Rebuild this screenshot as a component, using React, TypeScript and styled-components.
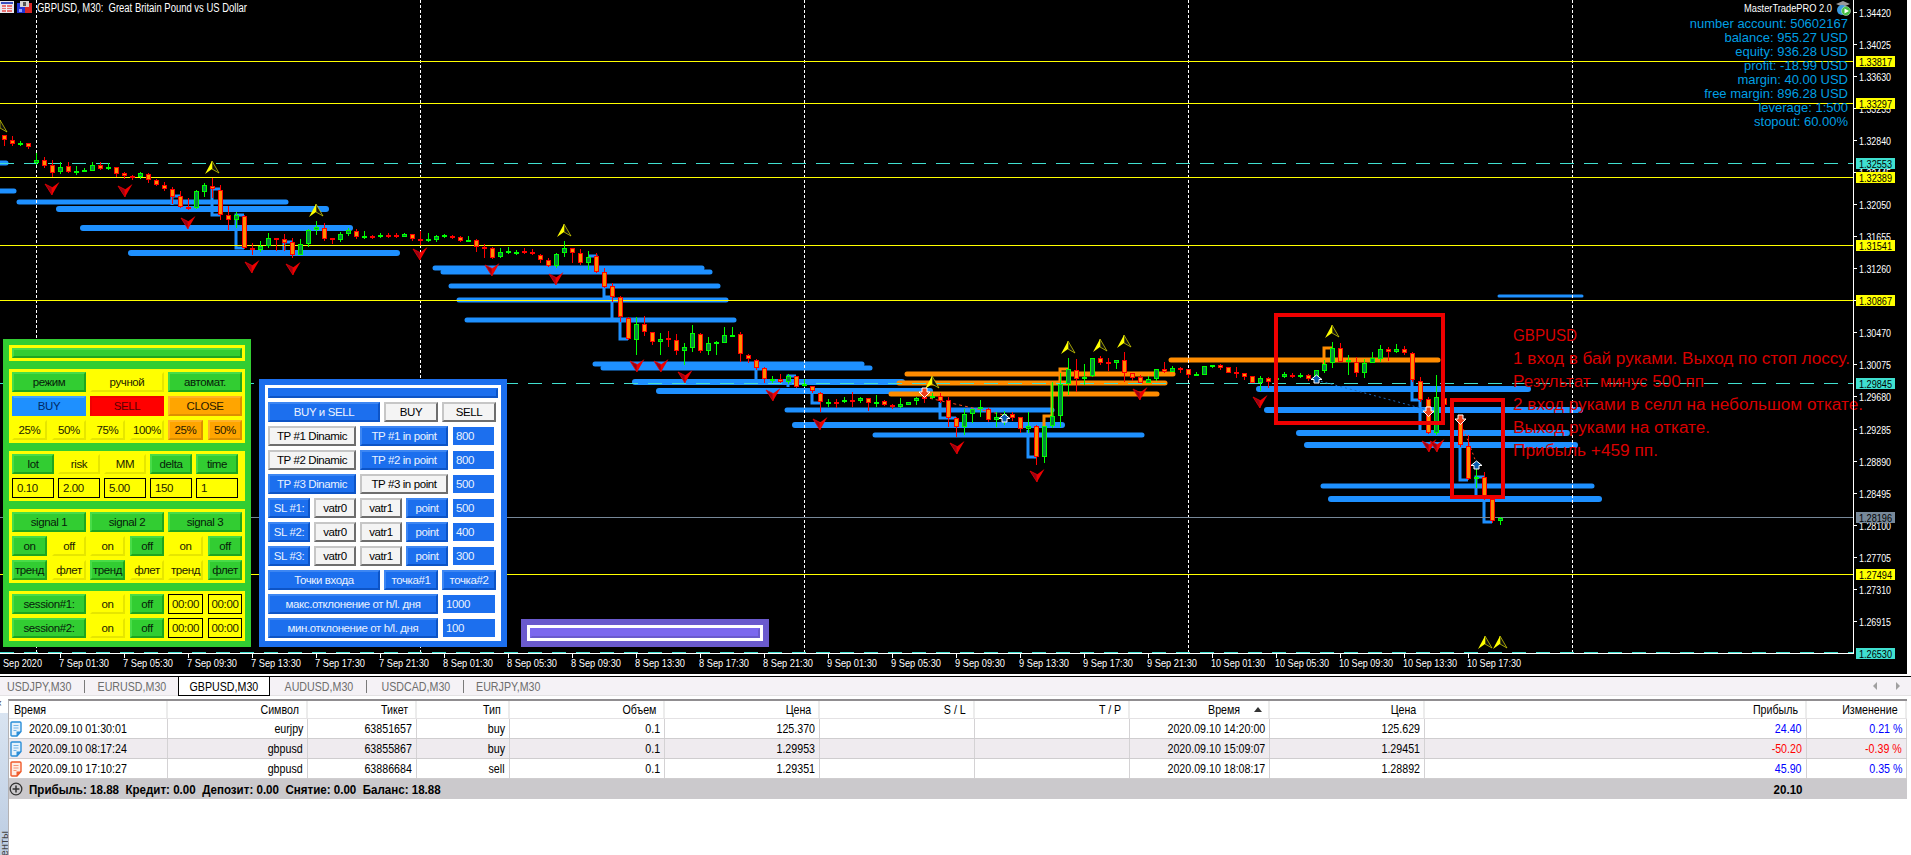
import React from "react";
import styled, { createGlobalStyle, css } from "styled-components";

const Global = createGlobalStyle`
  html, body { margin: 0; padding: 0; background: #fff; overflow: hidden; }
  * { box-sizing: border-box; }
`;

const SANS = `"Liberation Sans", Arial, sans-serif`;

type Candle = [number, number, number, number, number, 0 | 1];
// x, wick top, wick bottom, body top, body bottom, 1 = bull
const CANDLES: Candle[] = [
  [4,135,146,135,140,0],[12,136,146,140,144,0],[20,141,146,143,145,1],[28,143,149,143,147,0],
  [36,153,165,160,163,1],[44,157,168,160,166,0],[52,160,177,165,173,0],[60,162,174,167,172,1],
  [68,162,173,166,172,0],[76,166,175,171,172,1],[84,168,172,170,172,1],[92,162,171,165,171,1],
  [100,162,170,165,169,0],[108,163,170,167,169,1],[116,167,177,167,174,0],[124,172,179,173,176,0],
  [132,175,180,176,178,0],[140,172,179,173,177,1],[148,173,183,174,180,0],[156,179,186,180,185,0],
  [164,182,191,185,189,0],[172,187,204,189,197,0],[180,191,208,196,207,0],[188,198,210,207,209,0],
  [196,190,209,191,208,1],[204,183,197,185,192,1],[212,178,198,186,189,0],[220,185,220,190,215,0],
  [228,206,230,215,220,0],[236,212,228,215,220,1],[244,215,249,216,248,0],[252,243,255,248,249,0],
  [260,241,252,246,250,1],[268,233,248,238,246,1],[276,238,251,238,240,0],[284,234,251,239,243,0],
  [292,238,258,242,255,0],[300,239,255,244,255,1],[308,229,247,230,244,1],[316,221,235,227,230,1],
  [324,223,241,228,239,0],[332,238,244,238,240,0],[340,232,242,234,240,1],[348,228,236,230,234,1],
  [356,229,239,231,237,0],[364,231,239,236,237,1],[372,235,239,236,237,0],[380,233,238,235,237,1],
  [388,233,238,235,236,0],[396,233,238,235,237,0],[404,233,237,234,237,1],[412,234,241,234,239,0],
  [420,231,245,239,241,0],[428,233,242,239,241,1],[436,235,242,236,240,1],[444,234,238,235,236,1],
  [452,235,239,236,237,0],[460,236,242,237,241,0],[468,236,241,240,241,1],[476,239,252,240,247,0],
  [484,244,258,247,248,0],[492,247,259,248,258,0],[500,248,258,252,257,1],[508,247,254,251,253,1],
  [516,250,255,252,253,1],[524,248,254,251,253,0],[532,249,255,252,254,0],[540,254,263,255,260,0],
  [548,258,267,260,266,0],[556,253,268,254,266,1],[564,241,257,248,253,1],[572,248,263,248,253,0],
  [580,249,265,253,263,0],[588,251,270,257,263,1],[596,253,273,256,272,0],[604,268,288,272,287,0],
  [612,283,302,286,297,0],[620,296,322,297,317,0],[628,317,340,318,339,0],[636,317,355,324,340,1],
  [644,316,336,324,332,0],[652,332,345,332,342,0],[660,333,355,339,342,1],[668,331,347,338,340,0],
  [676,334,355,340,351,0],[684,343,365,347,351,1],[692,325,352,333,348,1],[700,333,353,334,351,0],
  [708,337,355,343,351,1],[716,341,355,342,343,1],[724,327,343,335,343,1],[732,327,337,335,336,1],
  [740,332,362,334,354,0],[748,354,363,355,359,0],[756,359,370,360,368,0],[764,367,383,368,379,0],
  [772,376,383,379,380,1],[780,374,383,379,382,0],[788,374,384,376,382,1],[796,376,388,376,387,0],
  [804,379,387,384,385,1],[812,386,393,386,391,0],[820,392,412,393,402,0],[828,399,407,402,403,1],
  [836,399,408,402,403,0],[844,397,403,400,402,1],[852,392,407,400,401,0],[860,397,403,398,401,1],
  [868,398,411,398,403,0],[876,395,407,402,404,1],[884,400,406,401,405,0],[892,404,409,405,407,0],
  [900,398,408,404,407,1],[908,402,405,402,405,1],[916,397,405,398,401,1],[924,393,403,397,399,0],
  [932,393,399,396,398,1],[940,393,403,396,401,0],[948,397,427,400,418,0],[956,417,437,418,427,0],
  [964,409,435,414,427,1],[972,409,423,409,414,1],[980,400,417,407,409,1],[988,408,422,409,420,0],
  [996,412,427,417,420,1],[1004,411,425,414,418,1],[1012,412,421,414,418,0],[1020,417,433,417,429,0],
  [1028,412,433,426,429,1],[1036,425,465,426,457,0],[1044,426,463,426,457,1],[1052,382,428,416,426,1],
  [1060,373,427,384,416,1],[1068,358,395,369,384,1],[1076,359,392,370,379,0],[1084,364,385,377,379,1],
  [1092,358,377,358,376,1],[1100,356,365,358,363,0],[1108,358,371,362,363,0],[1116,360,369,360,363,1],
  [1124,352,382,360,373,0],[1132,373,381,373,378,0],[1140,375,383,377,383,0],[1148,376,383,379,383,1],
  [1156,369,381,369,379,1],[1164,362,373,369,372,0],[1172,366,372,368,372,1],[1180,367,373,368,370,0],
  [1188,369,378,369,375,0],[1196,372,376,374,376,1],[1204,366,375,366,375,1],[1212,365,368,365,366,1],
  [1220,364,370,365,368,0],[1228,367,373,367,373,0],[1236,367,378,372,373,0],[1244,373,380,373,377,0],
  [1252,376,383,376,383,0],[1260,376,391,378,383,1],[1268,377,388,378,382,0],[1276,376,386,378,379,1],
  [1284,372,378,374,377,1],[1292,373,378,375,377,0],[1300,373,378,375,377,1],[1308,374,381,375,379,0],
  [1316,370,380,370,378,1],[1324,360,373,364,371,1],[1332,342,368,348,363,1],[1340,343,362,348,362,0],
  [1348,355,375,360,361,1],[1356,357,377,362,373,0],[1364,359,378,363,373,1],[1372,352,363,358,363,1],
  [1380,345,362,349,359,1],[1388,347,361,349,352,0],[1396,344,353,349,352,1],[1404,346,355,349,353,0],
  [1412,352,382,353,380,0],[1420,377,402,381,400,0],[1428,397,434,399,433,0],[1436,375,435,397,433,1],
  [1444,397,405,398,405,0],[1460,415,447,417,445,0],[1468,435,480,446,479,0],[1476,467,488,477,479,1],
  [1484,472,500,477,498,0],[1492,495,523,499,521,0],[1500,517,525,518,521,1],
];

// y, x1, x2, stroke width
const BLUE: [number, number, number, number][] = [
  [163,0,6,5],[191,0,14,5],[202,19,286,5],[209,59,326,6],[228,83,350,6],[253,131,397,6],[268,435,702,5],
  [272,443,710,5],[286,451,718,5],[300,459,726,5],[320,467,734,5],[364,595,862,5],[368,603,870,5],
  [382,635,902,6],[391,659,930,6],[410,787,1052,5],[425,795,1062,6],[435,875,1142,5],[389,1259,1528,6],
  [410,1267,1580,6],[433,1299,1567,6],[445,1307,1575,6],[486,1323,1592,5],[499,1331,1599,6],[296,1499,1582,3],
];
const ORANGE: [number, number, number, number][] = [
  [374,907,1173,5],[383,899,1165,5],[394,891,1157,5],[360,1171,1438,5],
];
const BLUE_STEPS = [
  "172,205 172,196 180,196","220,189 212,189 212,215 220,215","244,215 236,215 236,248 244,248","292,242 284,242 284,253",
  "588,256 596,256 596,273","604,272 604,297 612,297","612,302 612,318","620,322 620,339 628,339","756,368 756,380",
  "796,376 788,376 788,387","812,392 812,403 820,403","940,402 940,418 948,418","956,418 948,418","1028,430 1028,457 1036,457",
  "1412,380 1412,400 1420,400","1420,400 1420,433 1428,433","1460,445 1460,480 1468,480","1476,495 1476,477 1484,477","1484,498 1484,522 1492,522",
];
const ORANGE_STEPS = ["1052,416 1044,416 1044,427","1068,369 1060,369 1060,384","1332,348 1324,348 1324,364"];
const OLIVE_STEPS = ["1052,383 1052,416"];

const RED_MARKS: [number, number][] = [
  [52,182],[125,184],[188,216],[252,260],[293,262],[420,247],[492,263],[556,272],[637,359],[661,359],[685,370],
  [773,388],[820,417],[957,441],[1037,469],[1140,387],[1260,395],[1429,439],[1437,439],
];
const YELLOW_MARKS: [number, number][] = [
  [0,120],[212,161],[316,204],[564,224],[932,376],[1068,341],[1100,339],[1124,335],[1332,325],[1485,636],[1500,636],
];
const DOWN_ARROWS: [number, number][] = [[924,388],[1428,407],[1460,415]];
const UP_ARROWS: [number, number][] = [[1004,414],[1316,375],[1476,461]];

const VLINES = [36, 420, 804, 1188, 1572];
const YELLOW_LINES = [61, 103, 177, 245, 300, 574];
const TEAL_LINES = [163, 383];
const AXIS_TICKS: [string, number][] = [
  ["1.34420",12],["1.34025",44],["1.33630",76],["1.33235",108],["1.32840",140],["1.32445",172],["1.32050",204],["1.31655",236],
  ["1.31260",268],["1.30865",300],["1.30470",332],["1.30075",364],["1.29680",396],["1.29285",429],["1.28890",461],["1.28495",493],
  ["1.28100",525],["1.27705",557],["1.27310",589],["1.26915",621],
];
const PRICE_TAGS: [string, number, string][] = [
  ["1.33817",61,"#ffff00"],["1.33297",103,"#ffff00"],["1.32553",163,"#40e0d0"],["1.32389",177,"#ffff00"],["1.31541",245,"#ffff00"],
  ["1.30867",300,"#ffff00"],["1.29845",383,"#40e0d0"],["1.28196",517,"#778899"],["1.27494",574,"#ffff00"],["1.26530",653,"#40e0d0"],
];
const DAY_TIMES = [
  "7 Sep 01:30","7 Sep 05:30","7 Sep 09:30","7 Sep 13:30","7 Sep 17:30","7 Sep 21:30",
  "8 Sep 01:30","8 Sep 05:30","8 Sep 09:30","8 Sep 13:30","8 Sep 17:30","8 Sep 21:30",
  "9 Sep 01:30","9 Sep 05:30","9 Sep 09:30","9 Sep 13:30","9 Sep 17:30","9 Sep 21:30",
  "10 Sep 01:30","10 Sep 05:30","10 Sep 09:30","10 Sep 13:30","10 Sep 17:30",
];
const NOTES: [string, number, number][] = [
  ["GBPUSD",335,64],
  ["1 вход в бай руками. Выход по стоп лоссу.",358,337],
  ["Результат  минус 500 пп",381,191],
  ["2 вход руками в селл на небольшом откате.",404,350],
  ["Выход руками на откате.",427,197],
  ["Прибыль +459 пп.",450,145],
];

const Page = styled.div`
  width: 1911px;
  height: 855px;
  display: flex;
  flex-direction: column;
  overflow: hidden;
  background: #fff;
  font-family: ${SANS};
`;
const ChartArea = styled.div`
  position: relative;
  height: 674px;
  flex: none;
  background: #fff;
`;
const ChartSvg = styled.svg`
  display: block;
  background: #000;
`;
const InfoBox = styled.div`
  position: absolute;
  top: 17px;
  right: 63px;
  display: flex;
  flex-direction: column;
  align-items: flex-end;
  color: #009fe3;
  font: 13px/14px ${SANS};
`;
const PanelBase = styled.section`
  position: absolute;
  padding: 6px;
  display: flex;
  flex-direction: column;
  font: 11.5px ${SANS};
  letter-spacing: -0.4px;
`;
const GreenPanel = styled(PanelBase)`
  left: 3px;
  top: 339px;
  width: 248px;
  height: 308px;
  gap: 8px;
  background: #32cd32;
`;
const GreenSection = styled.div`
  background: #ffff00;
  padding: 3px;
  display: flex;
  flex-direction: column;
  gap: 4px;
`;
const BluePanel = styled(PanelBase)`
  left: 259px;
  top: 379px;
  width: 248px;
  height: 268px;
  background: #1c6fee;
`;
const WhiteInner = styled.div`
  background: #fff;
  height: 100%;
  padding: 3px;
  display: flex;
  flex-direction: column;
  gap: 4px;
`;
const PurplePanel = styled(PanelBase)`
  left: 521px;
  top: 619px;
  width: 248px;
  height: 28px;
  background: #6a5acd;
`;
const PurpleInner = styled.div`
  background: #fff;
  height: 16px;
  padding: 3px;
`;
const TitleBar = styled.div<{ $fill: string; $light: string; $dark: string }>`
  height: 10px;
  background: ${(p) => p.$fill};
  border-style: solid;
  border-width: 2px;
  border-color: ${(p) => p.$light} ${(p) => p.$dark} ${(p) => p.$dark} ${(p) => p.$light};
`;
const Row = styled.div<{ $cols: string; $gap?: number }>`
  display: grid;
  grid-template-columns: ${(p) => p.$cols};
  column-gap: ${(p) => p.$gap ?? 4}px;
  height: 20px;
`;
const Pair = styled.div`
  display: grid;
  grid-template-columns: 35px 34px;
  column-gap: 5px;
  height: 20px;
`;
type Tone = "green" | "yellow" | "blue" | "red" | "orange" | "deep" | "white";
const TONES: Record<Tone, string> = {
  green: "background:#32cd32;color:#06200a;border-color:#48dc48 #1fa51f #1fa51f #48dc48;",
  yellow: "background:#ffff00;color:#1c1c00;border-color:#ffff00 #e6e600 #e6e600 #ffff00;",
  blue: "background:#1e90ff;color:#002a66;border-color:#42a5ff #1e90ff #1e90ff #1e90ff;",
  red: "background:#ff0000;color:#5a0000;border-color:#f10000 #ff0000 #ff0000 #f10000;",
  orange: "background:#ffa500;color:#2a1a00;border-color:#ffb226 #dd8f00 #dd8f00 #ffb226;",
  deep: "background:#1c6fee;color:#eaf2ff;border-color:#3d86f2 #0d54c6 #0d54c6 #3d86f2;",
  white: "background:#f4f4f4;color:#000;border-color:#c6c6c6 #6e6e6e #6e6e6e #c6c6c6;",
};
const Btn = styled.button<{ $tone: Tone }>`
  appearance: none;
  margin: 0;
  padding: 0;
  min-width: 0;
  height: 20px;
  font: inherit;
  letter-spacing: inherit;
  line-height: 15px;
  text-align: center;
  white-space: nowrap;
  border-style: solid;
  border-width: 2px;
  ${(p) => css`${TONES[p.$tone]}`}
`;
const Field = styled.div<{ $center?: boolean }>`
  height: 20px;
  border: 1px solid #000;
  background: #ffff00;
  color: #1c1c00;
  line-height: 18px;
  padding-left: ${(p) => (p.$center ? 0 : 4)}px;
  text-align: ${(p) => (p.$center ? "center" : "left")};
  white-space: nowrap;
`;
const BlueField = styled.div`
  height: 18px;
  margin: 1px 0 1px 1px;
  background: #1c6fee;
  color: #eaf2ff;
  line-height: 18px;
  padding-left: 3px;
`;
const Sq = styled.span<{ $at?: string; $sx?: number }>`
  display: inline-block;
  flex: none;
  white-space: pre;
  transform: scaleX(${(p) => p.$sx ?? 0.82});
  transform-origin: ${(p) => p.$at ?? "right"} center;
`;
const TabsBar = styled.nav`
  height: 20px;
  flex: none;
  margin-top: 2px;
  border-top: 1px solid #000;
  border-bottom: 1px solid #e4e2e4;
  background: #f5f2f6;
  display: flex;
  align-items: stretch;
  position: relative;
  font: 13px ${SANS};
  color: #6d6d6d;
`;
const Tab = styled.div<{ $active?: boolean; $w: number; $rule?: boolean; $pad?: number }>`
  width: ${(p) => p.$w}px;
  padding-right: ${(p) => p.$pad ?? 0}px;
  display: flex;
  align-items: center;
  justify-content: center;
  white-space: nowrap;
  ${(p) => p.$rule && "background: linear-gradient(#7a7a7a,#7a7a7a) right 3px / 1px 13px no-repeat;"}
  ${(p) =>
    p.$active &&
    css`
      background: #fff;
      color: #000;
      margin-top: -1px;
      margin-bottom: -1px;
      border: 1px solid #000;
    `}
`;
const TabNav = styled.div`
  position: absolute;
  right: 11px;
  top: 5px;
  display: flex;
  gap: 17px;
`;
const BodyArea = styled.div`
  flex: 1;
  display: flex;
  min-height: 0;
  padding-top: 3px;
`;
const Side = styled.aside`
  width: 8px;
  flex: none;
  position: relative;
  overflow: hidden;
  font: 11px ${SANS};
  color: #444;
`;
const SideClose = styled.div`
  height: 14px;
  font: 10px/10px ${SANS};
  margin-left: -4px;
  color: #333;
`;
const SideStrip = styled.div`
  height: 100%;
  background: linear-gradient(#d9e4f1, #b8c9e0);
  padding-top: 118px;
`;
const SideLabel = styled.div`
  writing-mode: vertical-rl;
  transform: rotate(180deg);
  white-space: nowrap;
  line-height: 8px;
`;
const TablePane = styled.div`
  width: 1899px;
  border-top: 2px solid #908d90;
  border-left: 1px solid #b4b2b4;
  font: 13px ${SANS};
  color: #000;
`;
const COLS = "159px 140px 109px 93px 155px 155px 155px 155px 140px 155px 382px 100px";
const HeadRow = styled.div`
  display: grid;
  grid-template-columns: ${COLS};
  height: 18px;
  border-bottom: 1px solid #e4e2e4;
`;
const DataRow = styled.div<{ $shade?: boolean }>`
  display: grid;
  grid-template-columns: ${COLS};
  height: 20px;
  border-bottom: 1px solid #cfcdcf;
  background: ${(p) => (p.$shade ? "#efebef" : "#fff")};
`;
const HeadCell = styled.div<{ $left?: boolean }>`
  display: flex;
  align-items: center;
  justify-content: ${(p) => (p.$left ? "flex-start" : "flex-end")};
  gap: 14px;
  padding: 0 7px 0 5px;
  border-right: 2px solid #ececec;
`;
const SortMark = styled.span`
  flex: none;
  width: 0;
  height: 0;
  margin-right: -1px;
  border-left: 4px solid transparent;
  border-right: 4px solid transparent;
  border-bottom: 5px solid #333;
`;
const DataCell = styled.div<{ $color?: string; $left?: boolean }>`
  display: flex;
  align-items: center;
  justify-content: ${(p) => (p.$left ? "flex-start" : "flex-end")};
  gap: 7px;
  padding: 0 4px 0 1px;
  border-right: 1px solid #d4d2d4;
  color: ${(p) => p.$color ?? "#000"};
  white-space: nowrap;
`;
const SummaryRow = styled.div`
  display: grid;
  grid-template-columns: 1416px 382px 100px;
  height: 20px;
  background: #cbc9cc;
  font-weight: 700;
`;
const SummaryLeft = styled.div`
  display: flex;
  align-items: center;
  gap: 6px;
`;
const SummaryTotal = styled.div`
  display: flex;
  align-items: center;
  justify-content: flex-end;
  padding-right: 4px;
`;

const Mono = ({ children, x, y, w, size = 11, fill = "#fff" }: { children: React.ReactNode; x: number; y: number; w: number; size?: number; fill?: string }) => (
  <text x={x} y={y} textLength={w} lengthAdjust="spacingAndGlyphs" fontSize={size} fill={fill} fontFamily={SANS} xmlSpace="preserve">
    {children}
  </text>
);

const DocIcon = ({ tone }: { tone: "blue" | "red" }) => {
  const a = tone === "blue" ? "#2a8ed8" : "#f05a2a";
  const b = tone === "blue" ? "#e6f2fb" : "#fdece4";
  return (
    <svg width="12" height="16" viewBox="0 0 12 16" style={{ flex: "none" }}>
      <path d="M2 1h8q1 0 1 1v8.5L7 15H2q-1 0-1-1V2q0-1 1-1z" fill={b} stroke={a} strokeWidth="1.4" />
      <path d="M3.5 4.5h5M3.5 7h5M3.5 9.5h3" stroke={a} strokeWidth="1" opacity=".6" />
      <path d="M6.5 15.2v-4.7h4.7z" fill={a} />
    </svg>
  );
};

const Candles = () => (
  <g shapeRendering="crispEdges">
    {CANDLES.map(([x, hi, lo, top, bot, bull]) => {
      const c = bull ? "#00ff00" : "#ff0000";
      const f = bull ? "#068a3e" : "#ff8c00";
      const h = Math.max(bot - top, 2);
      return (
        <g key={x}>
          <rect x={x} y={hi} width={1} height={lo - hi} fill={c} />
          <rect x={x - 2} y={top} width={5} height={h} fill={c} />
          {h > 2 && <rect x={x - 1} y={top + 1} width={3} height={h - 2} fill={f} />}
        </g>
      );
    })}
  </g>
);

const Chart = () => (
  <ChartSvg width={1907} height={674} viewBox="0 0 1907 674">
    {BLUE.map(([y, a, b, w], i) => (
      <line key={i} x1={a} x2={b} y1={y} y2={y} stroke="#1e90ff" strokeWidth={w} strokeLinecap="round" />
    ))}
    {ORANGE.map(([y, a, b, w], i) => (
      <line key={i} x1={a} x2={b} y1={y} y2={y} stroke="#ff8c00" strokeWidth={w} strokeLinecap="round" />
    ))}
    {BLUE_STEPS.map((p) => (
      <polyline key={p} points={p} fill="none" stroke="#1e90ff" strokeWidth={3} />
    ))}
    {ORANGE_STEPS.map((p) => (
      <polyline key={p} points={p} fill="none" stroke="#ff8c00" strokeWidth={3} />
    ))}
    {OLIVE_STEPS.map((p) => (
      <polyline key={p} points={p} fill="none" stroke="#b8c800" strokeWidth={3} />
    ))}
    <g shapeRendering="crispEdges">
      {VLINES.map((x) => (
        <line key={x} x1={x + 0.5} x2={x + 0.5} y1={0} y2={653} stroke="#fff" strokeDasharray="3 2" />
      ))}
      {YELLOW_LINES.map((y) => (
        <line key={y} x1={0} x2={1853} y1={y + 0.5} y2={y + 0.5} stroke="#ffff00" />
      ))}
      <line x1={0} x2={1853} y1={517.5} y2={517.5} stroke="#778899" />
      {TEAL_LINES.map((y) => (
        <line key={y} x1={0} x2={1853} y1={y + 0.5} y2={y + 0.5} stroke="#40e0d0" strokeDasharray="14 10" />
      ))}
    </g>
    <polyline points="924,397 1004,415" fill="none" stroke="#ff4a1a" strokeDasharray="3 3" />
    <polyline points="1316,380 1428,410" fill="none" stroke="#1c66b8" strokeDasharray="2 3" />
    <polyline points="1460,420 1476,462" fill="none" stroke="#ff4a1a" strokeDasharray="2 3" />
    <Candles />
    {RED_MARKS.map(([x, y], i) => (
      <g key={i} transform={`translate(${x} ${y})`}>
        <path d="M-7 2 L0 13 L0 5.5 Z" fill="#980014" stroke="#f00000" strokeWidth=".8" />
        <path d="M7.5 0 L0 13 L0 5.5 Z" fill="#f00000" />
      </g>
    ))}
    {YELLOW_MARKS.map(([x, y], i) => (
      <g key={i} transform={`translate(${x} ${y})`}>
        <path d="M7 12 L0 0 L0 8 Z" fill="#111" stroke="#dede00" strokeWidth=".7" />
        <path d="M-7 13 L0 0 L0 8 Z" fill="#ffff00" />
      </g>
    ))}
    {DOWN_ARROWS.map(([x, y]) => (
      <path key={`${x}`} transform={`translate(${x} ${y})`} d="M-2 0H3V4H6L0.5 9.5L-5 4H-2Z" fill="#f0401a" stroke="#fff" />
    ))}
    {UP_ARROWS.map(([x, y]) => (
      <path key={`${x}`} transform={`translate(${x} ${y})`} d="M-2 8H3V4.5H6L0.5 0L-5 4.5H-2Z" fill="#0a5cb0" stroke="#fff" />
    ))}

    <g fill="none" stroke="#ef0000" strokeWidth={4}>
      <rect x={1276} y={315} width={167} height={108} />
      <rect x={1452} y={400} width={51} height={97} />
    </g>
    {NOTES.map(([t, y, w]) => (
      <text key={t} x={1513} y={y + 6} textLength={w} lengthAdjust="spacingAndGlyphs" fontSize={16} fill="#d80000" fontFamily={SANS} xmlSpace="preserve">
        {t}
      </text>
    ))}

    <g shapeRendering="crispEdges">
      <rect x={0} y={653} width={1853} height={1} fill="#fff" />
      <line x1={0} x2={1853} y1={652.5} y2={652.5} stroke="#40e0d0" strokeDasharray="14 10" />
      <rect x={1853} y={0} width={1} height={654} fill="#fff" />
      {AXIS_TICKS.map(([, y]) => (
        <rect key={y} x={1853} y={y} width={4} height={1} fill="#fff" />
      ))}
      {DAY_TIMES.map((_, i) => (
        <rect key={i} x={60 + 64 * i} y={653} width={1} height={5} fill="#fff" />
      ))}
    </g>
    {AXIS_TICKS.map(([t, y]) => (
      <Mono key={t} x={1859} y={y + 4.5} w={32}>{t}</Mono>
    ))}
    {PRICE_TAGS.map(([t, y, bg]) => (
      <g key={t}>
        <rect x={1856} y={y - 5} width={39} height={11} fill={bg} />
        <Mono x={1859} y={y + 4.5} w={33} fill="#000">{t}</Mono>
      </g>
    ))}
    <Mono x={3} y={667} w={39}>Sep 2020</Mono>
    {DAY_TIMES.map((t, i) => (
      <Mono key={t} x={59 + 64 * i} y={667} w={t.length > 11 ? 54 : 50}>{t}</Mono>
    ))}

    <g shapeRendering="crispEdges">
      <rect x={0} y={1} width={14} height={12} fill="#e8e8f0" />
      <rect x={1} y={2} width={12} height={2} fill="#3a4fc0" />
      <rect x={2} y={5} width={10} height={2} fill="#e87070" />
      <rect x={2} y={8} width={10} height={1} fill="#e87070" />
      <rect x={2} y={10} width={10} height={2} fill="#e87070" />
      <rect x={6} y={5} width={1} height={7} fill="#f4f4f4" />
      <rect x={17} y={3} width={8} height={10} fill="#2034d8" />
      <rect x={25} y={3} width={7} height={10} fill="#d82828" />
      <rect x={20} y={1} width={9} height={6} fill="#d4d4d4" />
      <rect x={23} y={2} width={3} height={4} fill="#555" />
      <rect x={19} y={9} width={3} height={3} fill="#90a0ff" />
    </g>
    <Mono x={37} y={12} w={210} size={12}>GBPUSD, M30:  Great Britain Pound vs US Dollar</Mono>
    <Mono x={1744} y={12} w={88} size={11.5}>MasterTradePRO 2.0</Mono>
    <g>
      <path d="M1836 4 L1843 1 L1850 4 L1843 7 Z" fill="#9a9a9a" />
      <circle cx={1842} cy={10} r={5} fill="#3a9ae0" />
      <circle cx={1846} cy={11} r={4.5} fill="#43c043" stroke="#dff0df" strokeWidth=".5" />
      <path d="M1844.5 8.5 L1849 11 L1844.5 13.5 Z" fill="#fff" />
    </g>
  </ChartSvg>
);

const TRADES = [
  { t: "2020.09.10 01:30:01", s: "eurjpy", id: "63851657", k: "buy", v: "0.1", p: "125.370", t2: "2020.09.10 14:20:00", p2: "125.629", pr: "24.40", ch: "0.21 %", c: "#0000ff", doc: "blue" as const, shade: false },
  { t: "2020.09.10 08:17:24", s: "gbpusd", id: "63855867", k: "buy", v: "0.1", p: "1.29953", t2: "2020.09.10 15:09:07", p2: "1.29451", pr: "-50.20", ch: "-0.39 %", c: "#ff0000", doc: "blue" as const, shade: true },
  { t: "2020.09.10 17:10:27", s: "gbpusd", id: "63886684", k: "sell", v: "0.1", p: "1.29351", t2: "2020.09.10 18:08:17", p2: "1.28892", pr: "45.90", ch: "0.35 %", c: "#0000ff", doc: "red" as const, shade: false },
];

export default function App() {
  return (
    <Page>
      <Global />
      <ChartArea>
        <Chart />
        <InfoBox>
          <span>number account: 50602167</span>
          <span>balance: 955.27 USD</span>
          <span>equity: 936.28 USD</span>
          <span>profit: -18.99 USD</span>
          <span>margin: 40.00 USD</span>
          <span>free margin: 896.28 USD</span>
          <span>leverage: 1:500</span>
          <span>stopout: 60.00%</span>
        </InfoBox>

        <GreenPanel>
          <GreenSection>
            <TitleBar $fill="#32cd32" $light="#48dc48" $dark="#1fa51f" />
          </GreenSection>
          <GreenSection>
            <Row $cols="74px 74px 74px">
              <Btn $tone="green">режим</Btn>
              <Btn $tone="yellow">ручной</Btn>
              <Btn $tone="green">автомат.</Btn>
            </Row>
            <Row $cols="74px 74px 74px">
              <Btn $tone="blue">BUY</Btn>
              <Btn $tone="red">SELL</Btn>
              <Btn $tone="orange">CLOSE</Btn>
            </Row>
            <Row $cols="74px 74px 74px">
              <Pair><Btn $tone="yellow">25%</Btn><Btn $tone="yellow">50%</Btn></Pair>
              <Pair><Btn $tone="yellow">75%</Btn><Btn $tone="yellow">100%</Btn></Pair>
              <Pair><Btn $tone="orange">25%</Btn><Btn $tone="orange">50%</Btn></Pair>
            </Row>
          </GreenSection>
          <GreenSection>
            <Row $cols="repeat(5, 42px)">
              <Btn $tone="green">lot</Btn>
              <Btn $tone="yellow">risk</Btn>
              <Btn $tone="yellow">MM</Btn>
              <Btn $tone="green">delta</Btn>
              <Btn $tone="green">time</Btn>
            </Row>
            <Row $cols="repeat(5, 42px)">
              <Field>0.10</Field>
              <Field>2.00</Field>
              <Field>5.00</Field>
              <Field>150</Field>
              <Field>1</Field>
            </Row>
          </GreenSection>
          <GreenSection>
            <Row $cols="74px 74px 74px">
              <Btn $tone="green">signal 1</Btn>
              <Btn $tone="green">signal 2</Btn>
              <Btn $tone="green">signal 3</Btn>
            </Row>
            <Row $cols="74px 74px 74px">
              <Pair><Btn $tone="green">on</Btn><Btn $tone="yellow">off</Btn></Pair>
              <Pair><Btn $tone="yellow">on</Btn><Btn $tone="green">off</Btn></Pair>
              <Pair><Btn $tone="yellow">on</Btn><Btn $tone="green">off</Btn></Pair>
            </Row>
            <Row $cols="74px 74px 74px">
              <Pair><Btn $tone="green">тренд</Btn><Btn $tone="yellow">флет</Btn></Pair>
              <Pair><Btn $tone="green">тренд</Btn><Btn $tone="yellow">флет</Btn></Pair>
              <Pair><Btn $tone="yellow">тренд</Btn><Btn $tone="green">флет</Btn></Pair>
            </Row>
          </GreenSection>
          <GreenSection>
            <Row $cols="74px 74px 74px">
              <Btn $tone="green">session#1:</Btn>
              <Pair><Btn $tone="yellow">on</Btn><Btn $tone="green">off</Btn></Pair>
              <Pair><Field $center>00:00</Field><Field $center>00:00</Field></Pair>
            </Row>
            <Row $cols="74px 74px 74px">
              <Btn $tone="green">session#2:</Btn>
              <Pair><Btn $tone="yellow">on</Btn><Btn $tone="green">off</Btn></Pair>
              <Pair><Field $center>00:00</Field><Field $center>00:00</Field></Pair>
            </Row>
          </GreenSection>
        </GreenPanel>

        <BluePanel>
          <WhiteInner>
            <TitleBar $fill="#1c6fee" $light="#1c6fee" $dark="#0d54c6" />
            <Row $cols="112px 54px 54px">
              <Btn $tone="deep">BUY и SELL</Btn>
              <Btn $tone="white">BUY</Btn>
              <Btn $tone="white">SELL</Btn>
            </Row>
            <Row $cols="88px 88px 42px">
              <Btn $tone="white">TP #1 Dinamic</Btn>
              <Btn $tone="deep">TP #1 in point</Btn>
              <BlueField>800</BlueField>
            </Row>
            <Row $cols="88px 88px 42px">
              <Btn $tone="white">TP #2 Dinamic</Btn>
              <Btn $tone="deep">TP #2 in point</Btn>
              <BlueField>800</BlueField>
            </Row>
            <Row $cols="88px 88px 42px">
              <Btn $tone="deep">TP #3 Dinamic</Btn>
              <Btn $tone="white">TP #3 in point</Btn>
              <BlueField>500</BlueField>
            </Row>
            {[["SL #1:", "500"], ["SL #2:", "400"], ["SL #3:", "300"]].map(([l, v]) => (
              <Row key={l} $cols="repeat(5, 42px)">
                <Btn $tone="deep">{l}</Btn>
                <Btn $tone="white">vatr0</Btn>
                <Btn $tone="white">vatr1</Btn>
                <Btn $tone="deep">point</Btn>
                <BlueField>{v}</BlueField>
              </Row>
            ))}
            <Row $cols="112px 54px 54px">
              <Btn $tone="deep">Точки входа</Btn>
              <Btn $tone="deep">точка#1</Btn>
              <Btn $tone="deep">точка#2</Btn>
            </Row>
            <Row $cols="170px 53px">
              <Btn $tone="deep">макс.отклонение от h/l. дня</Btn>
              <BlueField>1000</BlueField>
            </Row>
            <Row $cols="170px 53px">
              <Btn $tone="deep">мин.отклонение от h/l. дня</Btn>
              <BlueField>100</BlueField>
            </Row>
          </WhiteInner>
        </BluePanel>

        <PurplePanel>
          <PurpleInner>
            <TitleBar $fill="#7b68ee" $light="#7b68ee" $dark="#6a5acd" />
          </PurpleInner>
        </PurplePanel>
      </ChartArea>

      <TabsBar>
        <Tab $w={85} $pad={6} $rule><Sq $at="center">USDJPY,M30</Sq></Tab>
        <Tab $w={93}><Sq $at="center">EURUSD,M30</Sq></Tab>
        <Tab $w={92} $active><Sq $at="center">GBPUSD,M30</Sq></Tab>
        <Tab $w={97} $rule><Sq $at="center">AUDUSD,M30</Sq></Tab>
        <Tab $w={97} $rule><Sq $at="center">USDCAD,M30</Sq></Tab>
        <Tab $w={88}><Sq $at="center">EURJPY,M30</Sq></Tab>
        <TabNav>
          <svg width="5" height="8" viewBox="0 0 5 8"><path d="M4 0v8L0 4z" fill="#a0a0a0" /></svg>
          <svg width="5" height="8" viewBox="0 0 5 8"><path d="M1 0v8l4-4z" fill="#a0a0a0" /></svg>
        </TabNav>
      </TabsBar>

      <BodyArea>
        <Side>
          <SideClose>×</SideClose>
          <SideStrip>
            <SideLabel>Инструменты</SideLabel>
          </SideStrip>
        </Side>
        <TablePane>
          <HeadRow>
            <HeadCell $left><Sq $at="left">Время</Sq></HeadCell>
            <HeadCell><Sq>Символ</Sq></HeadCell>
            <HeadCell><Sq>Тикет</Sq></HeadCell>
            <HeadCell><Sq>Тип</Sq></HeadCell>
            <HeadCell><Sq>Объем</Sq></HeadCell>
            <HeadCell><Sq>Цена</Sq></HeadCell>
            <HeadCell><Sq>S / L</Sq></HeadCell>
            <HeadCell><Sq>T / P</Sq></HeadCell>
            <HeadCell><Sq>Время</Sq><SortMark /></HeadCell>
            <HeadCell><Sq>Цена</Sq></HeadCell>
            <HeadCell><Sq>Прибыль</Sq></HeadCell>
            <HeadCell><Sq>Изменение</Sq></HeadCell>
          </HeadRow>
          {TRADES.map((r) => (
            <DataRow key={r.id} $shade={r.shade}>
              <DataCell $left><DocIcon tone={r.doc} /><Sq $at="left">{r.t}</Sq></DataCell>
              <DataCell><Sq>{r.s}</Sq></DataCell>
              <DataCell><Sq>{r.id}</Sq></DataCell>
              <DataCell><Sq>{r.k}</Sq></DataCell>
              <DataCell><Sq>{r.v}</Sq></DataCell>
              <DataCell><Sq>{r.p}</Sq></DataCell>
              <DataCell />
              <DataCell />
              <DataCell><Sq>{r.t2}</Sq></DataCell>
              <DataCell><Sq>{r.p2}</Sq></DataCell>
              <DataCell $color={r.c}><Sq>{r.pr}</Sq></DataCell>
              <DataCell $color={r.c}><Sq>{r.ch}</Sq></DataCell>
            </DataRow>
          ))}
          <SummaryRow>
            <SummaryLeft>
              <svg width="14" height="14" viewBox="0 0 14 14">
                <circle cx="7" cy="7" r="5.8" fill="none" stroke="#333" strokeWidth="1.3" />
                <path d="M7 3.6v6.8M3.6 7h6.8" stroke="#333" strokeWidth="1.5" />
              </svg>
              <Sq $at="left" $sx={0.89}>Прибыль: 18.88  Кредит: 0.00  Депозит: 0.00  Снятие: 0.00  Баланс: 18.88</Sq>
            </SummaryLeft>
            <SummaryTotal><Sq $sx={0.89}>20.10</Sq></SummaryTotal>
            <span />
          </SummaryRow>
        </TablePane>
      </BodyArea>
    </Page>
  );
}
